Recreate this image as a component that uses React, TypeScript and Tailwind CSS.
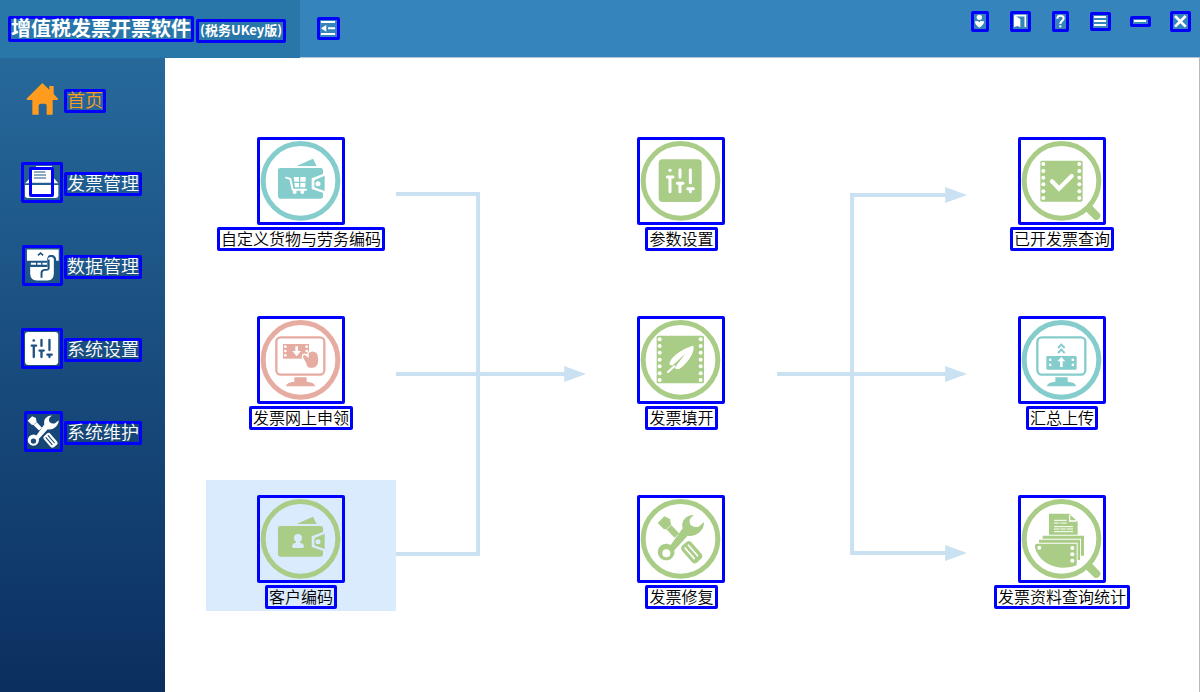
import type { ReactNode } from 'react';

const GREEN = '#a9cc86';
const TEAL = '#85cccc';
const PINK = '#e6aca2';
const WHITE = '#ffffff';
const NAVY = '#1d5284';

type Tone = { color: string; back: string };

/* ---------- round artwork, drawn on a 246 unit canvas ---------- */

function Ring({ color, children }: { color: string; children: ReactNode }) {
  return (
    <svg viewBox="0 0 246 246" className="size-full" aria-hidden="true">
      <circle cx="121.5" cy="122.5" r="112" fill="none" stroke={color} strokeWidth="15" />
      {children}
    </svg>
  );
}

function Wallet({ color, back }: Tone) {
  return (
    <g>
      <path d="M110 78 L159 56 L170 78Z" fill={color} />
      <rect x="54" y="84" width="135" height="92" rx="7" fill={color} />
      <path d="M197 99 L155 115 V147 L197 161Z" fill={back} />
      <path d="M194 107 L166 119 Q163 121 163 125 V138 Q163 142 166 143 L194 153Z" fill={color} />
      <circle cx="174" cy="131" r="7.5" fill={back} />
    </g>
  );
}

function GoodsIcon() {
  return (
    <Ring color={TEAL}>
      <Wallet color={TEAL} back={WHITE} />
      <path d="M78 113 L91 117 L98 149 H138" fill="none" stroke={WHITE} strokeWidth="6" strokeLinecap="round" strokeLinejoin="round" />
      <path d="M101 111h16v14h-14zM121 111h16v14h-16zM103 129h14v13h-12zM121 129h15v13h-15z" fill={WHITE} />
      <circle cx="104" cy="156" r="6" fill={WHITE} />
      <circle cx="127" cy="156" r="6" fill={WHITE} />
    </Ring>
  );
}

function ClientIcon() {
  const back = '#daebfd';
  return (
    <Ring color={GREEN}>
      <Wallet color={GREEN} back={back} />
      <circle cx="114" cy="120" r="12" fill={back} />
      <path d="M108 126 H120 L120 134 Q132 137 132 145 Q132 150 128 150 H100 Q96 150 96 145 Q96 137 108 134Z" fill={back} />
    </Ring>
  );
}

function Monitor({ color }: { color: string }) {
  return (
    <g>
      <rect x="49" y="55" width="144" height="112" rx="13" fill="none" stroke={color} strokeWidth="7" />
      <path d="M103 175 H140 V188 Q162 189 166 202 H77 Q81 189 103 188Z" fill={color} />
    </g>
  );
}

function ApplyIcon() {
  return (
    <Ring color={PINK}>
      <Monitor color={PINK} />
      <rect x="69" y="75" width="78" height="44" fill={PINK} />
      {[83, 96, 109].map((y) => (
        <g key={y} fill={WHITE}>
          <circle cx="76" cy={y} r="4" />
          <circle cx="140" cy={y} r="4" />
        </g>
      ))}
      <path d="M106 82 h8 v14 h9 l-13 16 -13-16 h9z" fill={WHITE} />
      <path
        d="M129 112 Q130 107 135 108 L146 117 V103 Q147 99 151 100 L155 98 Q159 96 162 99 Q169 98 173 108 Q176 122 173 135 Q168 147 156 146 H148 Q140 144 139 133 L130 117Z"
        fill={PINK}
        stroke={WHITE}
        strokeWidth="8"
        paintOrder="stroke"
        strokeLinejoin="round"
      />
    </Ring>
  );
}

function UploadIcon() {
  return (
    <Ring color={TEAL}>
      <Monitor color={TEAL} />
      <path d="M111 87 L121 77 L131 87 M111 102 L121 92 L131 102" fill="none" stroke={TEAL} strokeWidth="6" />
      <rect x="76" y="111" width="91" height="41" rx="4" fill={TEAL} />
      {[122, 137].map((y) => (
        <g key={y} fill={WHITE}>
          <rect x="84" y={y - 3} width="7" height="7" />
          <rect x="152" y={y - 3} width="7" height="7" />
        </g>
      ))}
      <path d="M121 114 L133 127 H125 V144 H117 V127 H109Z" fill={WHITE} />
    </Ring>
  );
}

function Sliders({ color, back }: Tone) {
  return (
    <g>
      <rect x="56" y="58" width="129" height="128" rx="12" fill={color} />
      <circle cx="90" cy="91" r="5" fill={back} />
      <path
        d="M82 111 H99 M90 111 V155 M120 89 V112 M112 130 H129 M120 130 V155 M151 89 V128 M143 146 H160 M151 146 V155"
        fill="none"
        stroke={back}
        strokeWidth="9"
        strokeLinecap="round"
      />
    </g>
  );
}

function SettingsIcon() {
  return (
    <Ring color={GREEN}>
      <Sliders color={GREEN} back={WHITE} />
    </Ring>
  );
}

function FillIcon() {
  return (
    <Ring color={GREEN}>
      <rect x="50" y="50" width="142" height="143" rx="5" fill={GREEN} />
      {[61, 81, 101, 122, 142, 163, 183].map((y) => (
        <g key={y} fill={WHITE}>
          <circle cx="59" cy={y} r="6" />
          <circle cx="182" cy={y} r="6" />
        </g>
      ))}
      <path d="M160 80 C140 84 92 108 88 136 L97 140 L137 103 L104 146 Q112 154 121 148 C142 132 166 100 160 80Z" fill={WHITE} />
      <path d="M84 159 L103 142" stroke={WHITE} strokeWidth="6" strokeLinecap="round" />
    </Ring>
  );
}

function Tools({ color, back }: Tone) {
  return (
    <g>
      <path d="M53 75 L73 55 L90 63 L93 80 L117 106 L104 119 L79 94 L71 93Z" fill={color} />
      <path d="M81 92 L93 82" stroke={back} strokeWidth="2" />
      <path
        d="M162 51 Q142 51 131 66 Q124 78 128 91 L92 141 A25 25 0 1 0 103 157 L143 113 Q162 117 177 104 Q193 91 192 72 L176 86 Q162 90 151 80 Q146 68 152 60Z"
        fill={color}
      />
      <circle cx="79" cy="166" r="12" fill={back} />
      <g transform="rotate(-41 153 160)">
        <rect x="134" y="130" width="38" height="67" rx="12" fill={color} />
        <path d="M146 141 V183 M159 141 V183" stroke={back} strokeWidth="5" strokeLinecap="round" />
      </g>
    </g>
  );
}

function RepairIcon() {
  return (
    <Ring color={GREEN}>
      <Tools color={GREEN} back={WHITE} />
    </Ring>
  );
}

function LensHandle() {
  return <path d="M201 205 L212 196 L237 222 Q241 228 236 234 Q230 243 221 239 L196 215Z" fill={GREEN} />;
}

function QueryIcon() {
  return (
    <Ring color={GREEN}>
      <LensHandle />
      <rect x="58" y="62" width="127" height="123" rx="5" fill={GREEN} />
      {[72, 93, 113, 133, 154, 174].map((y) => (
        <g key={y} fill={WHITE}>
          <circle cx="67" cy={y} r="6" />
          <circle cx="175" cy={y} r="6" />
        </g>
      ))}
      <path d="M93 124 L114 146 L152 108" fill="none" stroke={WHITE} strokeWidth="13" strokeLinecap="round" />
    </Ring>
  );
}

function StatsIcon() {
  return (
    <Ring color={GREEN}>
      <LensHandle />
      <path d="M84 47 H145 L170 71 V110 H84Z" fill={GREEN} />
      <path d="M146 50 V69 H167" fill="none" stroke={WHITE} strokeWidth="4" />
      <path d="M99 67 H137 M99 75 H137 M99 86 H156 M99 93 H156 M99 101 H156" stroke={WHITE} strokeWidth="3" />
      <path d="M112 75 H120 M115 93 H121 M133 93 H139" stroke={GREEN} strokeWidth="3" />
      <path d="M65 122 V113 H189 V173 H180 V122Z" fill={GREEN} />
      <path d="M54 134 V125 H177 V186 H170 V134Z" fill={GREEN} />
      <path d="M42 143 Q42 137 48 137 H167 V202 Q152 209 122 209 Q60 203 42 150Z" fill={GREEN} />
      <circle cx="55" cy="149" r="6" fill={WHITE} />
      {[150, 169, 188].map((y) => (
        <circle key={y} cx="154" cy={y} r="6" fill={WHITE} />
      ))}
    </Ring>
  );
}

/* ---------- sidebar artwork ---------- */

function HomeGlyph() {
  return (
    <svg viewBox="0 0 108 105" className="size-full" aria-hidden="true">
      <path
        d="M55 3 L76 23 V12 H89 V36 L102 50 Q104 54 99 54 H86 V98 H68 V71 Q68 65 62 65 H51 Q44 65 44 71 V98 H25 V54 H10 Q6 53 9 49Z"
        fill="#ff9c1e"
      />
    </svg>
  );
}

function InvoiceGlyph() {
  return (
    <svg viewBox="0 0 108 105" className="size-full" aria-hidden="true">
      <path d="M36 3 H84 V12 H88 V53 H20 V12 H36Z" fill={WHITE} />
      <path d="M30 21 H64 M30 30 H66 M30 39 H66" stroke={NAVY} strokeWidth="3" />
      <path d="M3 55 L18 40 V55Z M103 55 L90 40 V55Z" fill={WHITE} />
      <path d="M3 60 H103 V91 Q103 99 95 99 H11 Q3 99 3 91Z" fill={WHITE} />
    </svg>
  );
}

function DataGlyph() {
  return (
    <svg viewBox="0 0 108 105" className="size-full" aria-hidden="true">
      <path d="M6 3 H104 V38 H96 V30 Q90 18 76 20 Q68 24 68 38 H6Z" fill={WHITE} />
      <path d="M40 21 L48 14 L56 21" fill="none" stroke={NAVY} strokeWidth="5" />
      <path d="M18 44 H34 V50 H18Z M38 44 H50 V50 H38Z M54 44 H68 V50 H54Z" fill={WHITE} />
      <path
        d="M16 57 H70 V34 Q71 26 80 26 Q89 26 89 34 V78 Q88 98 70 99 H36 Q17 98 16 78Z"
        fill={WHITE}
      />
      <path d="M73 34 V62 Q72 66 66 66 H60 Q51 67 51 76 V90" fill="none" stroke={NAVY} strokeWidth="6" />
    </svg>
  );
}

function SlidersGlyph() {
  return (
    <svg viewBox="52 54 140 136" className="size-full" aria-hidden="true">
      <Sliders color={WHITE} back={NAVY} />
    </svg>
  );
}

function ToolsGlyph() {
  return (
    <svg viewBox="50 47 148 152" className="size-full" aria-hidden="true">
      <Tools color={WHITE} back="#194b7b" />
    </svg>
  );
}

const navItems = [
  { label: '首页', icon: <HomeGlyph />, box: 'w-[42px] border-transparent', text: 'text-[#ff9c1e]' },
  { label: '发票管理', icon: <InvoiceGlyph />, box: 'w-[42px] border-[#0000ff]', text: 'text-white', inner: true },
  { label: '数据管理', icon: <DataGlyph />, box: 'w-[41px] border-[#0000ff]', text: 'text-white' },
  { label: '系统设置', icon: <SlidersGlyph />, box: 'w-[42px] border-[#0000ff]', text: 'text-white' },
  { label: '系统维护', icon: <ToolsGlyph />, box: 'w-[39px] border-[#0000ff]', text: 'text-white' },
];

function Sidebar() {
  return (
    <nav className="w-[165px] shrink-0 bg-linear-to-b from-[#27699b] to-[#0b2f5f]">
      {navItems.map((item) => (
        <button key={item.label} type="button" className="flex h-[83px] w-full items-center gap-px pl-[21px]">
          <span className="flex w-[42px] shrink-0 justify-end">
            <span className={`relative block h-[41px] rounded-[2px] border-[3px] ${item.box}`}>
              {item.icon}
              {item.inner && (
                <span className="absolute top-[2px] left-[5px] h-[30px] w-[25px] rounded-[2px] border-[3px] border-[#0000ff]" />
              )}
            </span>
          </span>
          <span
            className={`mt-0.5 flex h-6 items-center rounded-[2px] border-[3px] border-[#0000ff] pb-[3px] text-lg leading-none font-[350] whitespace-nowrap ${item.text}`}
          >
            {item.label}
          </span>
        </button>
      ))}
    </nav>
  );
}

/* ---------- header ---------- */

const tools = [
  {
    label: '用户',
    box: 'h-[21px] w-[18px]',
    icon: (
      <svg viewBox="0 0 36 45" className="size-full" aria-hidden="true">
        <circle cx="16" cy="10" r="8" fill={WHITE} />
        <path d="M3 22 L12 21 L16 25 L20 21 L30 22 Q31 32 16 41 Q2 32 3 22Z" fill={WHITE} />
      </svg>
    ),
  },
  {
    label: '退出',
    box: 'size-[21px]',
    icon: (
      <svg viewBox="0 0 45 45" className="size-full" aria-hidden="true">
        <path d="M3 3 L22 15 V40 L14 36 L3 39Z" fill={WHITE} />
        <path d="M6 5 H37 V39" fill="none" stroke={WHITE} strokeWidth="5" />
      </svg>
    ),
  },
  {
    label: '帮助',
    box: 'h-[21px] w-[17px]',
    icon: (
      <svg viewBox="0 0 33 45" className="size-full" aria-hidden="true">
        <path d="M7 14 Q7 5 16 5 Q26 5 26 13 Q26 18 20 22 Q16 25 16 30" fill="none" stroke={WHITE} strokeWidth="6" />
        <rect x="13" y="34" width="6" height="6" fill={WHITE} />
      </svg>
    ),
  },
  {
    label: '菜单',
    box: 'h-[19px] w-[21px]',
    icon: (
      <svg viewBox="0 0 45 39" className="size-full" aria-hidden="true">
        <path d="M3 6 H39 M3 18 H39 M3 30 H39" stroke={WHITE} strokeWidth="6" />
      </svg>
    ),
  },
  {
    label: '最小化',
    box: 'h-[11px] w-[21px]',
    icon: (
      <svg viewBox="0 0 45 15" className="size-full" aria-hidden="true">
        <path d="M3 6 H39" stroke={WHITE} strokeWidth="6" />
      </svg>
    ),
  },
  {
    label: '关闭',
    box: 'size-[21px]',
    icon: (
      <svg viewBox="0 0 45 45" className="size-full" aria-hidden="true">
        <path d="M6 6 L38 38 M38 6 L6 38" stroke={WHITE} strokeWidth="8" />
      </svg>
    ),
  },
];

function Header() {
  return (
    <header className="flex h-[58px] shrink-0 bg-[#3584bb] text-white">
      <div className="flex w-[300px] shrink-0 items-center gap-0.5 bg-[#2976a9] pl-2 whitespace-nowrap">
        <h1 className="flex h-[26px] items-center rounded-[2px] border-[3px] border-[#0000ff] pb-0.5 text-xl leading-none font-bold">
          增值税发票开票软件
        </h1>
        <span className="mt-1 flex h-6 items-center rounded-[2px] border-[3px] border-[#0000ff] px-px pb-[3px] text-[13px] leading-none font-bold">
          (税务UKey版)
        </span>
      </div>
      <div className="flex grow items-center border-b border-[#b3c3d0] pl-[17px]">
        <button type="button" aria-label="收起菜单" className="size-[23px] rounded-[2px] border-[3px] border-[#0000ff]">
          <svg viewBox="0 0 51 51" className="size-full" aria-hidden="true">
            <path d="M3 6 H45 M24 25 H45 M3 42 H45" stroke={WHITE} strokeWidth="6" />
            <path d="M3 25 L19 15 V35Z" fill={WHITE} />
          </svg>
        </button>
        <div className="ml-auto flex self-start">
          {tools.map((tool) => (
            <button key={tool.label} type="button" aria-label={tool.label} className="flex h-[43px] w-10 items-center justify-center">
              <span className={`block rounded-[2px] border-[3px] border-[#0000ff] ${tool.box}`}>{tool.icon}</span>
            </button>
          ))}
        </div>
      </div>
    </header>
  );
}

/* ---------- work flow ---------- */

type CardProps = { label: string; icon: ReactNode; place: string; active?: boolean };

const cards: CardProps[] = [
  { label: '自定义货物与劳务编码', icon: <GoodsIcon />, place: 'col-start-1 row-start-1' },
  { label: '发票网上申领', icon: <ApplyIcon />, place: 'col-start-1 row-start-2' },
  { label: '客户编码', icon: <ClientIcon />, place: 'col-start-1 row-start-3', active: true },
  { label: '参数设置', icon: <SettingsIcon />, place: 'col-start-3 row-start-1' },
  { label: '发票填开', icon: <FillIcon />, place: 'col-start-3 row-start-2' },
  { label: '发票修复', icon: <RepairIcon />, place: 'col-start-3 row-start-3' },
  { label: '已开发票查询', icon: <QueryIcon />, place: 'col-start-5 row-start-1' },
  { label: '汇总上传', icon: <UploadIcon />, place: 'col-start-5 row-start-2' },
  { label: '发票资料查询统计', icon: <StatsIcon />, place: 'col-start-5 row-start-3' },
];

function Card({ label, icon, place, active }: CardProps) {
  return (
    <button
      type="button"
      className={`flex flex-col items-center gap-0.5 pt-[15px] pb-0.5 ${place} ${active ? 'bg-[#daebfd]' : ''}`}
    >
      <span className="block size-[88px] rounded-[2px] border-[3px] border-[#0000ff]">{icon}</span>
      <span className="flex h-6 items-center rounded-[2px] border-[3px] border-[#0000ff] px-px pb-[3px] text-base leading-none font-[350] whitespace-nowrap text-black">
        {label}
      </span>
    </button>
  );
}

function Flow() {
  return (
    <main className="min-w-0 grow border-r border-[#b9b9b9] bg-white pt-16 pr-[42px] pb-16 pl-[41px]">
      <div className="grid grid-cols-5 gap-y-12">
        <svg
          viewBox="0 0 190 489"
          preserveAspectRatio="none"
          className="col-start-2 row-span-3 row-start-1 h-0 min-h-full w-full"
          aria-hidden="true"
        >
          <path d="M0 72 H82 V432 H0 M0 252 H169" fill="none" stroke="#cae1f2" strokeWidth="4" />
          <path d="M168 244 L190 252 L168 260Z" fill="#cae1f2" />
        </svg>
        <svg
          viewBox="0 0 190 489"
          preserveAspectRatio="none"
          className="col-start-4 row-span-3 row-start-1 h-0 min-h-full w-full"
          aria-hidden="true"
        >
          <path d="M169 73 H75 V431 H169 M0 252 H169" fill="none" stroke="#cae1f2" strokeWidth="4" />
          <path d="M168 65 L190 73 L168 81Z M168 244 L190 252 L168 260Z M168 423 L190 431 L168 439Z" fill="#cae1f2" />
        </svg>
        {cards.map((card) => (
          <Card key={card.label} {...card} />
        ))}
      </div>
    </main>
  );
}

export default function App() {
  return (
    <div className="flex min-h-screen flex-col font-['Noto_Sans_CJK_SC',sans-serif]">
      <Header />
      <div className="flex grow">
        <Sidebar />
        <Flow />
      </div>
    </div>
  );
}
